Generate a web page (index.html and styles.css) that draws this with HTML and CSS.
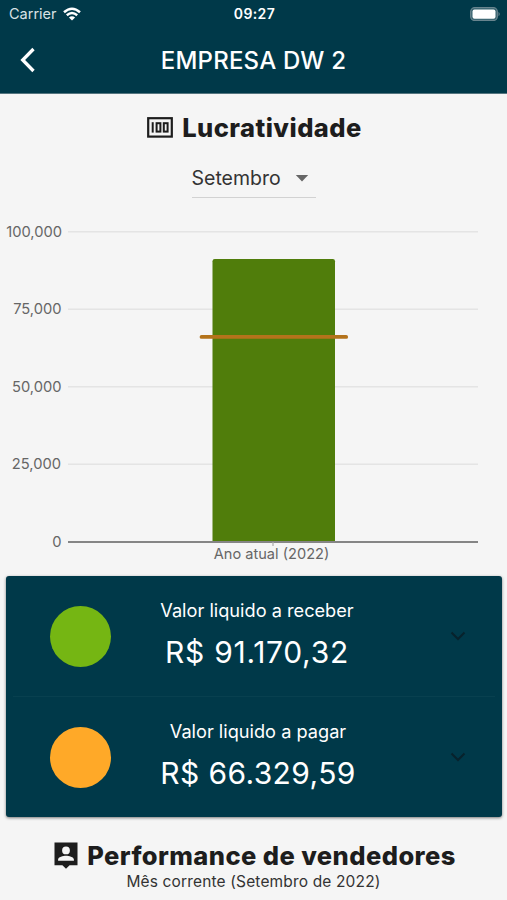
FILE: index.html
```html
<!DOCTYPE html>
<html lang="pt-BR">
<head>
<meta charset="utf-8">
<meta name="viewport" content="width=device-width, initial-scale=1">
<title>Empresa DW 2</title>
<link rel="stylesheet" href="styles.css">
</head>
<body>
<header class="header">
  <div class="status">
    <div class="carrier"><span>Carrier</span>
      <svg width="18" height="14" viewBox="0 0 18 14" fill="none" stroke="#fff" stroke-width="2.5"><path d="M1 5.2Q9-1.8 17 5.2M3.8 8.2Q9 3.8 14.2 8.2"/><path d="M9 13.5 5.9 10.4Q9 7.9 12.1 10.4Z" fill="#fff" stroke="none"/></svg>
    </div>
    <span class="time">09:27</span>
    <svg class="battery" width="30" height="14" viewBox="0 0 30 14"><rect x=".7" y=".7" width="26.6" height="12.8" rx="4" fill="#33606d" stroke="#68848e" stroke-width="1.3"/><rect x="2.5" y="2.5" width="23" height="9.2" rx="2" fill="#fff"/><path d="M28.5 4.7Q31 7 28.5 9.3Z" fill="#68848e"/></svg>
  </div>
  <div class="appbar">
    <svg class="back" width="16" height="26" viewBox="0 0 16 26"><path d="M14.5 2 3.7 13 14.5 24" fill="none" stroke="#fff" stroke-width="3.3"/></svg>
    <h1 class="title">EMPRESA DW 2</h1>
  </div>
</header>
<main>
  <section class="profit">
    <h2 class="heading">
      <svg width="26" height="21" viewBox="0 0 26 21" fill="none" stroke="#1d1d1d"><rect x="1.2" y="1.2" width="23.6" height="18.4" stroke-width="2.2"/><path d="M5.7 5.2V15.6" stroke-width="2"/><rect x="9.6" y="6.2" width="3.8" height="8.4" stroke-width="2"/><rect x="16.8" y="6.2" width="3.8" height="8.4" stroke-width="2"/></svg>
      <span class="heading-profit">Lucratividade</span>
    </h2>
    <div class="select"><span>Setembro</span><svg width="14" height="7" viewBox="0 0 14 7"><path d="M.8 0H13.2L7 6.4Z" fill="#666"/></svg></div>
    <svg class="chart" width="507" height="360" viewBox="0 210 507 360">
      <path d="M68 231.7H478M68 309.3H478M68 386.8H478M68 464.3H478" stroke="#e4e4e4" stroke-width="1.6"/>
      <path d="M212.5 542V261.2Q212.5 259 214.7 259H332.8Q335 259 335 261.2V542Z" fill="#507d0b"/>
      <path d="M68 542H478" stroke="#858585" stroke-width="1.8"/>
      <path d="M273 542V546" stroke="#aaa" stroke-width="1.2"/>
      <path d="M201.5 336.9H346.2" stroke="#b4731b" stroke-width="3.7" stroke-linecap="round"/>
      <g class="axis" text-anchor="end">
        <text x="62" y="237.2">100,000</text>
        <text x="61.5" y="314.4">75,000</text>
        <text x="61.5" y="392">50,000</text>
        <text x="61" y="469.4">25,000</text>
        <text x="61.5" y="547.4">0</text>
      </g>
      <text class="axis period" x="271.5" y="559.4" text-anchor="middle">Ano atual (2022)</text>
    </svg>
  </section>
  <section class="card">
    <div class="row">
      <span class="dot receive"></span>
      <div class="amount"><span class="label label-receive">Valor liquido a receber</span><span class="value value-receive">R$ 91.170,32</span></div>
      <svg class="chevron" width="16" height="10" viewBox="0 0 16 10"><path d="M1.5 1.5 8 8 14.5 1.5" fill="none" stroke="#07222c" stroke-width="2"/></svg>
    </div>
    <div class="row">
      <span class="dot pay"></span>
      <div class="amount"><span class="label">Valor liquido a pagar</span><span class="value">R$ 66.329,59</span></div>
      <svg class="chevron" width="16" height="10" viewBox="0 0 16 10"><path d="M1.5 1.5 8 8 14.5 1.5" fill="none" stroke="#07222c" stroke-width="2"/></svg>
    </div>
  </section>
  <section class="sellers">
    <h2 class="heading">
      <svg width="24" height="27" viewBox="0 0 24 27"><path fill="#1d1d1d" fill-rule="evenodd" d="M.5.5H23.5V23.3H15.6L12 26.8 8.4 23.3H.5ZM12 4.5A3.9 3.9 0 1 0 12 12.3 3.9 3.9 0 1 0 12 4.5ZM4.1 18.7H19.9V17.5C19.9 14.9 14.8 13.7 12 13.7S4.1 14.9 4.1 17.5Z"/></svg>
      <span class="heading-sellers">Performance de vendedores</span>
    </h2>
    <p class="subtitle">Mês corrente (Setembro de 2022)</p>
  </section>
</main>
</body>
</html>
```
FILE: styles.css
```css
* { box-sizing: border-box; }
body { margin: 0; width: 507px; height: 900px; overflow: hidden; background: #f5f5f5; font-family: Inter, "Liberation Sans", sans-serif; color: #1d1d1d; white-space: nowrap; }
svg { display: block; flex: none; }
h1, h2, p { margin: 0; }
.header { height: 94px; background: #003949; border-bottom: 1px solid #55757f; color: #fff; }
.status { height: 27px; display: grid; grid-template-columns: 1fr auto 1fr; align-items: center; padding: 0 7px 0 9px; }
.carrier { display: flex; align-items: center; gap: 6px; font-size: 14.5px; color: #d9e2e5; }
.time { font-size: 14px; font-weight: 600; letter-spacing: .4px; }
.battery { justify-self: end; }
.appbar { height: 66px; display: grid; grid-template-columns: 80px 1fr 80px; align-items: center; }
.back { margin-left: 19px; }
.title { text-align: center; font-size: 24px; font-weight: 500; line-height: 30px; letter-spacing: .2px; padding-top: 1px; }
.profit { display: flex; flex-direction: column; align-items: center; padding-top: 16px; }
.heading { display: flex; justify-content: center; align-items: center; gap: 9px; height: 34px; font-size: 25.5px; font-weight: 800; }
.heading-profit { letter-spacing: .45px; margin-right: -2px; }
.heading-sellers { letter-spacing: .43px; margin-right: -3px; }
.select { width: 124px; height: 38px; margin-top: 16px; padding-bottom: 1px; display: flex; align-items: center; gap: 14px; border-bottom: 1px solid #d2d2d2; font-size: 19.5px; color: #333; }
.chart { margin-top: 12px; }
.axis { font-size: 14.7px; fill: #666; }
.period { font-size: 14.6px; }
.card { height: 241px; margin: 6px 5px 0 6px; background: #003949; border-radius: 3px; box-shadow: 0 1px 3px rgba(0,0,0,.5); color: #fff; }
.row { height: 120px; margin: 0 7px; display: grid; grid-template-columns: 126px 1fr 118px; align-items: center; }
.row + .row { border-top: 1px solid #08404f; height: 121px; }
.dot { width: 61px; height: 61px; margin-left: 37px; border-radius: 50%; }
.receive { background: #75b613; }
.pay { background: #ffa928; }
.amount { display: flex; flex-direction: column; align-items: center; gap: 6px; padding-top: 1px; }
.label { font-size: 18.2px; line-height: 24px; }
.label-receive { margin-right: 2px; }
.value { font-size: 30px; line-height: 48px; letter-spacing: .4px; }
.value-receive { letter-spacing: .7px; margin-right: 2px; }
.chevron { margin-left: 73px; }
.sellers { padding-top: 21px; }
.subtitle { text-align: center; font-size: 15.5px; line-height: 18px; letter-spacing: .15px; margin-top: 1px; color: #333; }
```
